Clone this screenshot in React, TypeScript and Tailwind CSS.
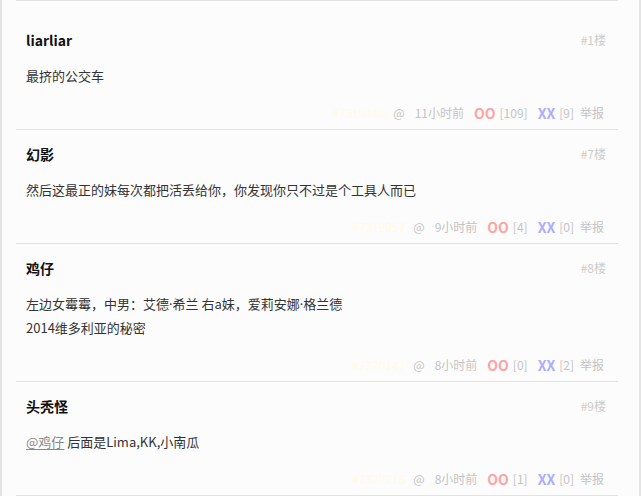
import React from "react";

type Post = {
  name: string;
  floor: string;
  lines: React.ReactNode[];
  id: string;
  time: string;
  oo: string;
  xx: string;
};

const Dot = () => <span style={{ fontFamily: '"Noto Sans", sans-serif' }}>·</span>;

const posts: Post[] = [
  { name: "liarliar", floor: "#1楼", lines: ["最挤的公交车"], id: "#7319446", time: "11小时前", oo: "[109]", xx: "[9]" },
  { name: "幻影", floor: "#7楼", lines: ["然后这最正的妹每次都把活丢给你，你发现你只不过是个工具人而已"], id: "#7319957", time: "9小时前", oo: "[4]", xx: "[0]" },
  {
    name: "鸡仔",
    floor: "#8楼",
    lines: [
      <>
        左边女霉霉，中男：艾德<Dot />希兰 右a妹，爱莉安娜<Dot />格兰德
      </>,
      "2014维多利亚的秘密",
    ],
    id: "#7320147",
    time: "8小时前",
    oo: "[0]",
    xx: "[2]",
  },
  {
    name: "头秃怪",
    floor: "#9楼",
    lines: [
      <>
        <span className="text-[#888] underline underline-offset-2">@鸡仔</span> 后面是Lima,KK,小南瓜
      </>,
    ],
    id: "#7320216",
    time: "8小时前",
    oo: "[1]",
    xx: "[0]",
  },
];

export default function App() {
  return (
    <div
      className="w-[641px] h-[496px] overflow-hidden bg-[#fcfcfc] border-l-2 border-r-2 border-[#e4e4e4] flex"
      style={{ fontFamily: '"Noto Sans CJK SC", "Noto Sans", sans-serif' }}
    >
      <div className="ml-[14px] w-[602px] flex flex-col">
        {posts.map((p, i) => (
          <div
            key={i}
            className={
              "border-b border-[#e3e3e3] pl-[10px] pr-[12px] pb-[7px] " +
              (i === 0 ? "border-t pt-[29px]" : "pt-[14px]")
            }
          >
            <div className="flex items-center justify-between h-[20px]">
              <span className="text-[14px] font-bold text-[#111]">{p.name}</span>
              <span className="text-[12px] text-[#cccccc]">{p.floor}</span>
            </div>
            <div className="mt-[14px] text-[13px] leading-[24px] text-[#333]">
              {p.lines.map((l, j) => (
                <div key={j}>{l}</div>
              ))}
            </div>
            <div className="mt-[16px] h-[18px] flex items-center justify-end pr-[2px] text-[12px] text-[#c4c4c4]">
              <span className="text-[#fefbe6]">{p.id}</span>
              <span className="ml-[8px]">@</span>
              <span className="ml-[10px]">{p.time}</span>
              <span className="ml-[10px] text-[14px] font-bold text-[#ffa3a3]">OO</span>
              <span className="ml-[4px]">{p.oo}</span>
              <span className="ml-[10px] text-[14px] font-bold text-[#adadff]">XX</span>
              <span className="ml-[4px]">{p.xx}</span>
              <span className="ml-[6px]">举报</span>
            </div>
          </div>
        ))}
      </div>
    </div>
  );
}
